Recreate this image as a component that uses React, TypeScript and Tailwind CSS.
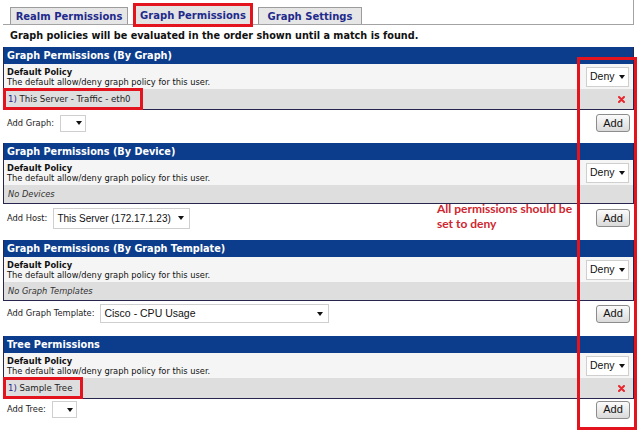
import type { ReactNode } from "react"

const verdana = "font-['DejaVu_Sans',Verdana,sans-serif]"
const arial = "font-['Liberation_Sans',Arial,sans-serif]"

function Caret() {
    return (
        <svg width="6" height="4" viewBox="0 0 6 4" className="shrink-0">
            <path d="M0 0 H6 L3 4 Z" fill="#111" />
        </svg>
    )
}

function Select({ value, className }: { value?: string; className: string }) {
    return (
        <div className={`flex items-center justify-between bg-white border border-[#cfcfcf] pl-[3px] pr-[3px] text-[#111] whitespace-nowrap ${arial} ${className}`}>
            <span>{value}</span>
            <Caret />
        </div>
    )
}

function AddButton() {
    return (
        <div className={`w-[34px] h-[18px] flex items-center justify-center rounded-[3px] border border-[#8c8c8c] bg-gradient-to-b from-[#fbfbfb] to-[#dadada] text-[11px] text-[#111] ${arial}`}>
            Add
        </div>
    )
}

function RemoveIcon() {
    return (
        <svg width="7" height="7" viewBox="0 0 7 7">
            <path d="M1 1 L6 6 M6 1 L1 6" stroke="#e8262c" strokeWidth="2" strokeLinecap="round" />
        </svg>
    )
}

interface SectionProps {
    title: string
    item?: string
    empty?: string
    boxWidth?: number
    addLabel: string
    addControl: ReactNode
    addRowClass: string
}

function Section({ title, item, empty, boxWidth, addLabel, addControl, addRowClass }: SectionProps) {
    return (
        <div>
            <div className="border-x border-b border-[#26264f]">
                <div className="h-[17px] bg-[#0b3d8c] text-white font-bold text-[9.7px] leading-[17px] pl-[3px]">
                    {title}
                </div>
                <div className="h-[25px] bg-[#f5f5f5] flex items-center justify-between pl-[3px] pr-[4px]">
                    <div className="text-[8.3px] leading-[10px] text-[#111]">
                        <div className="font-bold">Default Policy</div>
                        <div>The default allow/deny graph policy for this user.</div>
                    </div>
                    <Select value="Deny" className="w-[43px] h-[20px] text-[10.5px]" />
                </div>
                {item ? (
                    <div className="relative h-[20px] bg-[#dedede] flex items-center justify-between pl-[4px] pr-[8px] text-[8.6px] text-[#222]">
                        <span>
                            <span className="text-[#1f2a8c]">1)</span> {item}
                        </span>
                        <RemoveIcon />
                        <div
                            className="absolute left-[-1px] top-[-1px] h-[22px] border-[3px] border-[#e3141d]"
                            style={{ width: boxWidth }}
                        />
                    </div>
                ) : (
                    <div className="h-[18px] bg-[#dedede] flex items-center pl-[4px] text-[8.3px] italic text-[#333]">
                        {empty}
                    </div>
                )}
            </div>
            <div className={`flex items-center justify-between pl-[4px] pr-[4px] ${addRowClass}`}>
                <div className="flex items-center gap-[6px] text-[8.3px] text-[#222]">
                    <span>{addLabel}</span>
                    {addControl}
                </div>
                <AddButton />
            </div>
        </div>
    )
}

export default function App() {
    return (
        <div className={`relative w-[640px] h-[430px] overflow-hidden bg-white ${verdana}`}>
            <div className="pl-[3px] pr-[6px]">
                <div className="flex items-end gap-[5px] h-[25px] pl-[7px] border-b border-r border-[#a3a3a3]">
                    <div className="w-[118px] h-[17px] flex items-center justify-center bg-[#e6e6e6] border border-b-0 border-[#9c9c9c] text-[10px] font-bold text-[#1f2a8c]">
                        Realm Permissions
                    </div>
                    <div className="relative z-10 -mb-[3px] w-[120px] h-[24px] border-[3px] border-[#e3141d] flex">
                        <div className="w-full h-full flex items-center justify-center bg-[#e3e3e3] text-[10px] font-bold text-[#1f2a8c]">
                            Graph Permissions
                        </div>
                    </div>
                    <div className="w-[104px] h-[17px] flex items-center justify-center bg-[#e6e6e6] border border-b-0 border-[#9c9c9c] text-[10px] font-bold text-[#1f2a8c]">
                        Graph Settings
                    </div>
                </div>
                <div className="h-[22px] pl-[7px] pt-[5px] text-[9.7px] font-bold text-[#111] leading-[12px]">
                    Graph policies will be evaluated in the order shown until a match is found.
                </div>

                <Section
                    title="Graph Permissions (By Graph)"
                    item="This Server - Traffic - eth0"
                    boxWidth={140}
                    addLabel="Add Graph:"
                    addControl={<Select className="w-[26px] h-[17px]" />}
                    addRowClass="h-[20px] mt-[3px] mb-[10px]"
                />
                <Section
                    title="Graph Permissions (By Device)"
                    empty="No Devices"
                    addLabel="Add Host:"
                    addControl={<Select value="This Server (172.17.1.23)" className="w-[137px] h-[21px] text-[10px] pr-[5px]" />}
                    addRowClass="h-[22px] mt-[3px] mb-[11px]"
                />
                <Section
                    title="Graph Permissions (By Graph Template)"
                    empty="No Graph Templates"
                    addLabel="Add Graph Template:"
                    addControl={<Select value="Cisco - CPU Usage" className="w-[229px] h-[19px] text-[10.5px] pr-[5px]" />}
                    addRowClass="h-[19px] mt-[3px] mb-[13px]"
                />
                <Section
                    title="Tree Permissions"
                    item="Sample Tree"
                    boxWidth={80}
                    addLabel="Add Tree:"
                    addControl={<Select className="w-[25px] h-[17px]" />}
                    addRowClass="h-[19px] mt-[1px]"
                />
            </div>

            <div className="absolute left-[437px] top-[201px] font-['Lato',sans-serif] font-bold text-[12px] leading-[15px] text-[#d0262f]">
                <div>All permissions should be</div>
                <div>set to deny</div>
            </div>
            <div className="absolute left-[577px] top-[57px] w-[60px] h-[373px] border-[3px] border-[#e3141d]" />
        </div>
    )
}
